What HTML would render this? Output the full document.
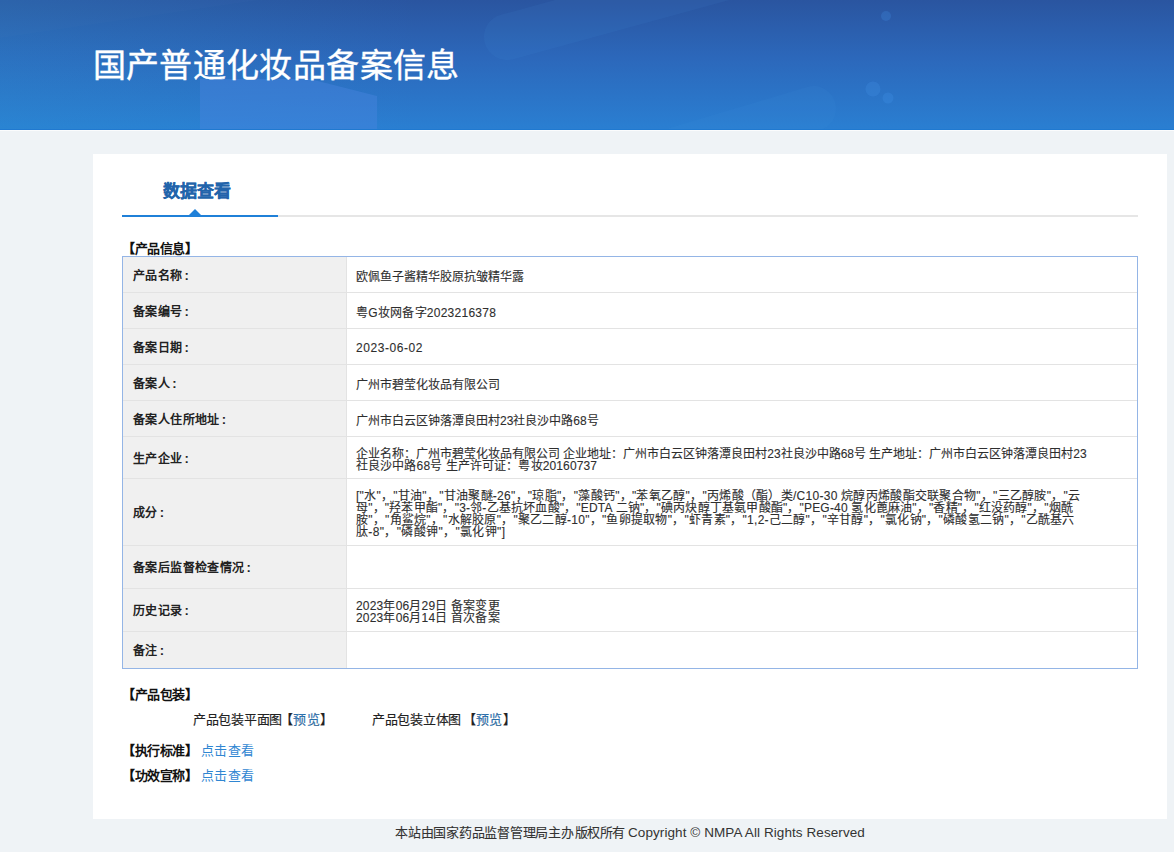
<!DOCTYPE html>
<html lang="zh-CN"><head><meta charset="utf-8">
<style>
*{margin:0;padding:0;box-sizing:border-box}
html,body{width:1174px;height:852px;overflow:hidden;background:#eff3f6;font-family:"Liberation Sans",sans-serif;color:#333}
#hdr{position:absolute;left:0;top:0;width:1174px;height:130px;overflow:hidden;
 background:linear-gradient(180deg,#2a55a0 0%,#2c68bb 45%,#2a7fd2 100%)}
#hdr .s{position:absolute}
#hdr .t{position:absolute;left:92.5px;top:45.5px;font-size:33px;letter-spacing:0.4px;color:#fff;white-space:nowrap;line-height:40px;-webkit-text-stroke:0.35px #fff}
#hdr .bl{position:absolute;left:0;top:129px;width:1174px;height:1px;background:#2079d0}
#wl{position:absolute;left:0;top:130px;width:1174px;height:1px;background:#fbfcfd}
#card{position:absolute;left:93px;top:154px;width:1074px;height:665px;background:#fff}
#tab{position:absolute;left:70px;top:25.5px;font-size:17px;font-weight:bold;color:#2264ab;line-height:24px;-webkit-text-stroke:0.25px #2264ab}
#tabline{position:absolute;left:29px;top:61px;width:1016px;height:2px;background:#e6e6e6}
#tabline .b{position:absolute;left:0;top:0;width:156px;height:2px;background:#1f80d8}
#tabline .tri{position:absolute;left:67px;top:-6px;width:0;height:0;border-left:6px solid transparent;border-right:6px solid transparent;border-bottom:6px solid #1f80d8}
.sec{position:absolute;font-size:13px;font-weight:bold;color:#111;line-height:16px;white-space:nowrap;letter-spacing:-0.5px}
#tbl{position:absolute;left:29px;top:102px;width:1016px;border:1px solid #94b5e6;border-collapse:separate;border-spacing:0}
#tbl td{border-bottom:1px solid #e3e3e3;vertical-align:middle;white-space:nowrap}
#tbl tr:last-child td{border-bottom:0}
#tbl tr:last-child td.l{padding-bottom:2px}
#tbl td.l{width:224px;background:#f0f0f0;border-right:1px solid #e3e3e3;padding-left:10px;padding-bottom:1px;font-size:12px;letter-spacing:0.38px;font-weight:bold;color:#222}
#tbl td.l i{font-style:normal;font-size:13px;margin-left:2px}
#tbl td.v{padding-left:9px;padding-top:4px;font-size:12px;line-height:12px;color:#2e2e2e;-webkit-text-stroke:0.1px #2e2e2e}
.lnk{color:#2f86d2}
.pk{position:absolute;top:558px;font-size:13px;letter-spacing:-0.3px;line-height:16px;white-space:nowrap;color:#222;-webkit-text-stroke:0.15px #222}
#foot{position:absolute;left:0;top:819px;width:1174px;height:33px;color:#333;white-space:nowrap}
#f1{position:absolute;left:395px;top:6px;font-size:13px;letter-spacing:-0.25px;line-height:16px;-webkit-text-stroke:0.1px #333}
#f2{position:absolute;left:628px;top:5px;font-size:13.5px;letter-spacing:0.08px;line-height:18px}
</style></head><body>
<div id="hdr">
 <svg class="s" width="1174" height="130" style="left:0;top:0">
  <defs>
   <linearGradient id="gl" x1="0" y1="0" x2="1" y2="0"><stop offset="0" stop-color="#2aa0d8" stop-opacity="0.18"/><stop offset="1" stop-color="#2aa0d8" stop-opacity="0"/></linearGradient>
  </defs>
  <rect x="0" y="0" width="420" height="130" fill="url(#gl)"/>
  <polygon points="0,38 260,0 0,0" fill="#ffffff" opacity="0.012"/>
  <polygon points="200,79 310,79 377,96 377,130 200,130" fill="#4a86e0" opacity="0.42"/>
  <rect x="484" y="14" width="420" height="46" rx="23" ry="23" transform="rotate(-15.3 507 37)" fill="#5ab0f0" opacity="0.07"/>
  <rect x="536" y="86" width="300" height="45" rx="22.5" ry="22.5" transform="rotate(-16.7 813.5 108.5)" fill="#5ab0f0" opacity="0.06"/>
  <circle cx="886" cy="16" r="5" fill="#4a9af0" opacity="0.22"/>
  <circle cx="873" cy="89" r="7.5" fill="#4a9af0" opacity="0.2"/>
  <circle cx="888" cy="98" r="5.5" fill="#4a9af0" opacity="0.22"/>
 </svg>
 <div class="t">国产普通化妆品备案信息</div>
 <div class="bl"></div>
</div>
<div id="wl"></div>
<div id="card">
 <div id="tab">数据查看</div>
 <div id="tabline"><div class="b"></div><div class="tri"></div></div>
 <div class="sec" style="left:29px;top:87px">【产品信息】</div>
 <table id="tbl">
  <tr style="height:36px"><td class="l">产品名称<i>:</i></td><td class="v">欧佩鱼子酱精华胶原抗皱精华露</td></tr>
  <tr style="height:36px"><td class="l">备案编号<i>:</i></td><td class="v"><span style="letter-spacing:0.25px">粤G妆网备字2023216378</span></td></tr>
  <tr style="height:36px"><td class="l">备案日期<i>:</i></td><td class="v"><span style="letter-spacing:0.55px;position:relative;top:-1px">2023-06-02</span></td></tr>
  <tr style="height:36px"><td class="l">备案人<i>:</i></td><td class="v">广州市碧莹化妆品有限公司</td></tr>
  <tr style="height:36px"><td class="l">备案人住所地址<i>:</i></td><td class="v">广州市白云区钟落潭良田村23社良沙中路68号</td></tr>
  <tr style="height:42px"><td class="l">生产企业<i>:</i></td><td class="v">企业名称：广州市碧莹化妆品有限公司 企业地址：广州市白云区钟落潭良田村23社良沙中路68号 生产地址：广州市白云区钟落潭良田村23<br><span style="letter-spacing:0.12px">社良沙中路68号 生产许可证：粤妆20160737</span></td></tr>
  <tr style="height:67px"><td class="l">成分<i>:</i></td><td class="v"><span style="letter-spacing:0.28px">["水"，"甘油"，"甘油聚醚-26"，"琼脂"，"藻酸钙"，"苯氧乙醇"，"丙烯酸（酯）类/C10-30 烷醇丙烯酸酯交联聚合物"，"三乙醇胺"，"云</span><br><span style="letter-spacing:0.19px">母"，"羟苯甲酯"，"3-邻-乙基抗坏血酸"，"EDTA 二钠"，"碘丙炔醇丁基氨甲酸酯"，"PEG-40 氢化蓖麻油"，"香精"，"红没药醇"，"烟酰</span><br><span style="letter-spacing:0.26px">胺"，"角鲨烷"，"水解胶原"，"聚乙二醇-10"，"鱼卵提取物"，"虾青素"，"1,2-己二醇"，"辛甘醇"，"氯化钠"，"磷酸氢二钠"，"乙酰基六</span><br><span style="letter-spacing:0.36px">肽-8"，"磷酸钾"，"氯化钾"]</span></td></tr>
  <tr style="height:43px"><td class="l">备案后监督检查情况<i>:</i></td><td class="v"></td></tr>
  <tr style="height:43px"><td class="l">历史记录<i>:</i></td><td class="v"><span style="letter-spacing:0.19px">2023年06月29日 备案变更<br>2023年06月14日 首次备案</span></td></tr>
  <tr style="height:36px"><td class="l">备注<i>:</i></td><td class="v"></td></tr>
 </table>
 <div class="sec" style="left:29px;top:533px">【产品包装】</div>
 <div class="pk" style="left:100px">产品包装平面图<span style="margin-left:-2px;letter-spacing:0.3px">【<span class="lnk">预览</span>】</span></div>
 <div class="pk" style="left:279px">产品包装立体图 <span style="margin-left:-1.5px;letter-spacing:0.3px">【<span class="lnk">预览</span>】</span></div>
 <div class="sec" style="left:29px;top:589px">【执行标准】 <span class="lnk" style="font-weight:normal;margin-left:1px;letter-spacing:0.2px">点击查看</span></div>
 <div class="sec" style="left:29px;top:614px">【功效宣称】 <span class="lnk" style="font-weight:normal;margin-left:1px;letter-spacing:0.2px">点击查看</span></div>
</div>
<div id="foot"><div id="f1">本站由国家药品监督管理局主办<span style="margin-left:1px;letter-spacing:-0.5px">版权所有</span></div><div id="f2">Copyright © NMPA All Rights Reserved</div></div>
</body></html>
